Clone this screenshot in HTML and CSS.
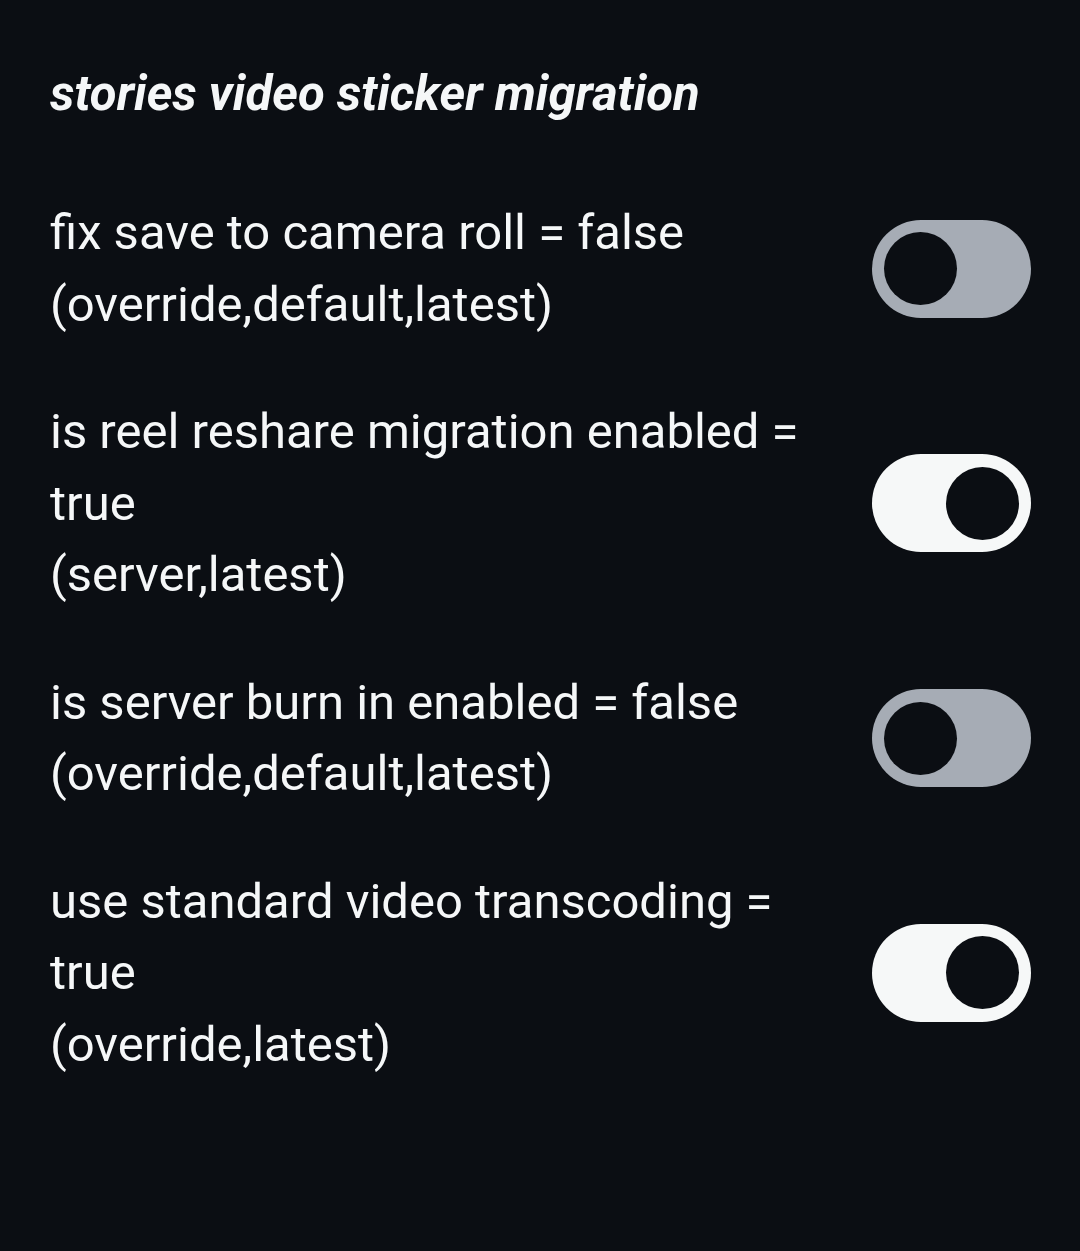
FILE: index.html
```html
<!DOCTYPE html>
<html>
<head>
<meta charset="utf-8">
<link rel="stylesheet" href="styles.css">
</head>
<body>
<div class="page">
  <h1 class="title">stories video sticker migration</h1>
  <div class="list">
    <div class="row">
      <div class="label">fix save to camera roll = false<br>(override,default,latest)</div>
      <div class="toggle off"><span class="thumb"></span></div>
    </div>
    <div class="row">
      <div class="label">is reel reshare migration enabled = true<br>(server,latest)</div>
      <div class="toggle on"><span class="thumb"></span></div>
    </div>
    <div class="row">
      <div class="label">is server burn in enabled = false<br>(override,default,latest)</div>
      <div class="toggle off"><span class="thumb"></span></div>
    </div>
    <div class="row">
      <div class="label">use standard video transcoding = true<br>(override,latest)</div>
      <div class="toggle on"><span class="thumb"></span></div>
    </div>
  </div>
</div>
</body>
</html>
```

FILE: styles.css
```css
html, body {
  margin: 0;
  padding: 0;
  background: #0b0e13;
}
body {
  width: 1080px;
  height: 1251px;
  overflow: hidden;
  font-family: Roboto, "Noto Sans", sans-serif;
  color: #f5f7f8;
}
.page {
  padding: 62px 49px 0 50px;
}
.title {
  margin: 0;
  font-size: 49px;
  font-weight: 700;
  font-style: italic;
  line-height: 64px;
  letter-spacing: 0;
}
.list {
  margin-top: 71px;
  display: flex;
  flex-direction: column;
  gap: 56px;
}
.row {
  display: flex;
  align-items: center;
  justify-content: space-between;
}
.label {
  width: 780px;
  font-size: 49px;
  line-height: 71.5px;
  font-weight: 400;
}
.toggle {
  width: 159px;
  height: 98px;
  border-radius: 49px;
  box-sizing: border-box;
  padding: 12px;
  display: flex;
  align-items: center;
  flex-shrink: 0;
}
.toggle.off {
  background: #a6acb5;
  justify-content: flex-start;
}
.toggle.on {
  background: #f6f8f8;
  justify-content: flex-end;
}
.thumb {
  width: 73px;
  height: 73px;
  border-radius: 50%;
  background: #0b0e13;
}
```
